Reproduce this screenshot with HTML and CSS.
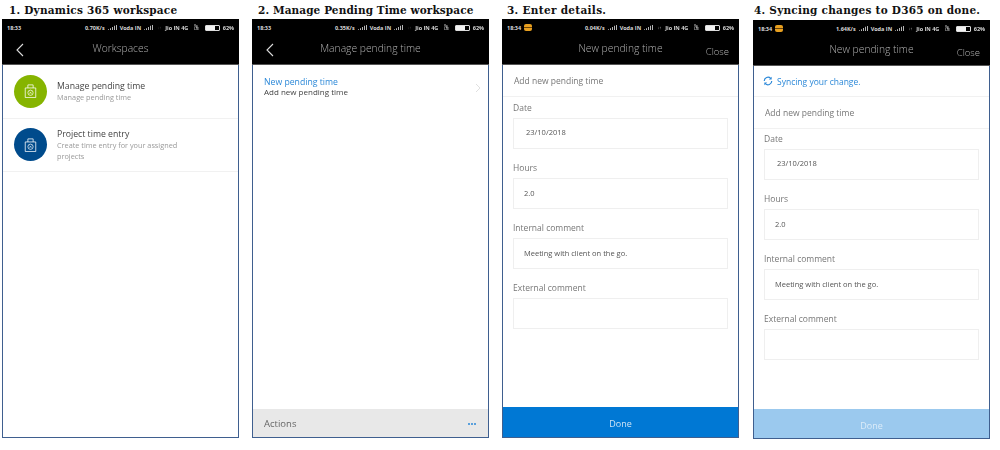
FILE: index.html
```html
<!DOCTYPE html>
<html lang="en">
<head>
  <meta charset="UTF-8">
  <title>Pending time walkthrough</title>
  <link rel="stylesheet" href="styles.css">
</head>
<body>

  <svg class="defs" width="0" height="0">
    <symbol id="bars" viewBox="0 0 11 6">
      <path d="M0 5h1v1H0zM2.500 4h1v2h-1zM5 2.500h1V6H5zM7.500 1h1v5h-1zM10 0h1v6h-1z" fill="#ddd"/>
    </symbol>
    <symbol id="clip" viewBox="0 0 14 16">
      <path d="M1 4.500h12v11H1zM4 4.500V1h6v3.500" fill="none" stroke="#fff" stroke-opacity=".8" stroke-width="1.100"/>
      <circle cx="7" cy="10" r="3" fill="none" stroke="#fff" stroke-opacity=".8" stroke-width="1"/>
      <path d="M5.800 8.800l2.400 2.400M8.200 8.800l-2.400 2.400" stroke="#fff" stroke-opacity=".8" stroke-width=".8"/>
    </symbol>
    <symbol id="back" viewBox="0 0 8 14">
      <path d="M7 1L1 7l6 6" fill="none" stroke="#ddd" stroke-width="1.100"/>
    </symbol>
  </svg>

  <div class="page">

    <div class="step first">
      <h2>1. Dynamics 365 workspace</h2>
      <div class="phone">
        <div class="topbar">
          <div class="status">
            <span class="time">18:33</span>
            <span class="spacer"></span>
            <span>0.70K/s</span><svg class="sig"><use href="#bars"/></svg>
            <span>Voda IN</span><svg class="sig"><use href="#bars"/></svg>
            <span class="arrows dim">↓↑</span>
            <span>Jio IN 4G</span><span class="lte">Vo<br>LTE</span>
            <span class="batt"><i></i></span><span>62%</span>
          </div>
          <div class="title">
            <svg class="back"><use href="#back"/></svg>
            <span class="title-text">Workspaces</span>
          </div>
        </div>
        <div class="ws-row">
          <span class="circle green"><svg class="clip"><use href="#clip"/></svg></span>
          <div class="ws-text">
            <div class="ws-name">Manage pending time</div>
            <div class="ws-desc">Manage pending time</div>
          </div>
        </div>
        <div class="ws-row">
          <span class="circle blue"><svg class="clip"><use href="#clip"/></svg></span>
          <div class="ws-text">
            <div class="ws-name">Project time entry</div>
            <div class="ws-desc">Create time entry for your assigned<br>projects</div>
          </div>
        </div>
      </div>
    </div>

    <div class="step second">
      <h2>2. Manage Pending Time workspace</h2>
      <div class="phone">
        <div class="topbar">
          <div class="status">
            <span class="time">18:33</span>
            <span class="spacer"></span>
            <span>0.35K/s</span><svg class="sig"><use href="#bars"/></svg>
            <span>Voda IN</span><svg class="sig"><use href="#bars"/></svg>
            <span class="arrows dim">↓↑</span>
            <span>Jio IN 4G</span><span class="lte">Vo<br>LTE</span>
            <span class="batt"><i></i></span><span>62%</span>
          </div>
          <div class="title">
            <svg class="back"><use href="#back"/></svg>
            <span class="title-text">Manage pending time</span>
          </div>
        </div>
        <div class="link-row">
          <div>
            <div class="link-name">New pending time</div>
            <div class="link-desc">Add new pending time</div>
          </div>
          <svg class="chevron" viewBox="0 0 6 10"><path d="M1 1l4 4-4 4" fill="none" stroke="#ddd" stroke-width=".9"/></svg>
        </div>
        <div class="grow"></div>
        <div class="actions">
          <span>Actions</span>
          <span class="dots"><i></i><i></i><i></i></span>
        </div>
      </div>
    </div>

    <div class="step third">
      <h2>3. Enter details.</h2>
      <div class="phone">
        <div class="topbar">
          <div class="status">
            <span class="time">18:34</span><span class="app-badge"></span>
            <span class="spacer"></span>
            <span>0.04K/s</span><svg class="sig"><use href="#bars"/></svg>
            <span>Voda IN</span><svg class="sig"><use href="#bars"/></svg>
            <span class="arrows">↓↑</span>
            <span>Jio IN 4G</span><span class="lte">Vo<br>LTE</span>
            <span class="batt"><i></i></span><span>62%</span>
          </div>
          <div class="title">
            <span class="title-text">New pending time</span>
            <span class="close">Close</span>
          </div>
        </div>
        <div class="form-head">Add new pending time</div>
        <div class="form">
          <label>Date</label>
          <div class="field date">23/10/2018</div>
          <label>Hours</label>
          <div class="field">2.0</div>
          <label>Internal comment</label>
          <div class="field">Meeting with client on the go.</div>
          <label>External comment</label>
          <div class="field"></div>
        </div>
        <div class="grow"></div>
        <div class="done">Done</div>
      </div>
    </div>

    <div class="step last">
      <h2>4. Syncing changes to D365 on done.</h2>
      <div class="phone">
        <div class="topbar">
          <div class="status">
            <span class="time">18:34</span><span class="app-badge"></span>
            <span class="spacer"></span>
            <span>1.64K/s</span><svg class="sig"><use href="#bars"/></svg>
            <span>Voda IN</span><svg class="sig"><use href="#bars"/></svg>
            <span class="arrows">↓↑</span>
            <span>Jio IN 4G</span><span class="lte">Vo<br>LTE</span>
            <span class="batt"><i></i></span><span>62%</span>
          </div>
          <div class="title">
            <span class="title-text">New pending time</span>
            <span class="close">Close</span>
          </div>
        </div>
        <div class="sync">
          <svg class="sync-icon" viewBox="0 0 12 12">
            <path d="M1.500 6a4.500 4.500 0 0 1 7.700-3.200M10.500 6a4.500 4.500 0 0 1-7.700 3.200" fill="none" stroke="#2b88d8" stroke-width="1.400"/>
            <path d="M10.400 .8v3.400H7zM1.600 11.200V7.800H5z" fill="#2b88d8"/>
          </svg>
          <span>Syncing your change.</span>
        </div>
        <div class="form-head">Add new pending time</div>
        <div class="form">
          <label>Date</label>
          <div class="field date">23/10/2018</div>
          <label>Hours</label>
          <div class="field">2.0</div>
          <label>Internal comment</label>
          <div class="field">Meeting with client on the go.</div>
          <label>External comment</label>
          <div class="field"></div>
        </div>
        <div class="grow"></div>
        <div class="done syncing">Done</div>
      </div>
    </div>

  </div>

</body>
</html>
```

FILE: styles.css
```css
body {
  font-family: "Open Sans", Arial, sans-serif;
  background: #fff;
  color: #333;
  margin: 0;
  padding: 0;
}

.defs {
  display: block;
}

.page {
  display: flex;
  gap: 13px;
  padding: 3px 0 0 2px;
}

.step {
  width: 237px;
}

.step.first h2 {
  letter-spacing: .22px;
}

.step.second h2 {
  padding-left: 6px;
}

.step.third h2 {
  padding-left: 5px;
  letter-spacing: .3px;
}

.step.last {
  margin-left: 1px;
}

.step.last h2 {
  margin-bottom: 3px;
  padding-left: 1px;
  letter-spacing: .24px;
}

h2 {
  font-family: "DejaVu Serif", "Liberation Serif", serif;
  font-size: 10.500px;
  font-weight: bold;
  line-height: 14px;
  height: 14px;
  margin: 0 0 2px;
  padding-left: 7px;
  color: #111;
  white-space: nowrap;
  letter-spacing: .1px;
}

.phone {
  height: 419px;
  box-sizing: border-box;
  border: 1px solid #3f5f8f;
  border-top: 0;
  display: flex;
  flex-direction: column;
  filter: blur(.3px);
}

.topbar {
  background: #000;
  color: #ddd;
  height: 46px;
  margin: 0 -1px;
  padding: 0 5px;
  border-bottom: 1px solid #555;
  box-sizing: border-box;
}

.status {
  display: flex;
  align-items: center;
  gap: 3px;
  height: 17px;
  font-size: 5.500px;
  font-weight: bold;
  color: #d8d8d8;
  white-space: nowrap;
}

.spacer {
  flex: 1;
}

.app-badge {
  width: 8px;
  height: 7px;
  border-radius: 2px;
  background: linear-gradient(#e8a020 40%, #6a4208 40%, #6a4208 60%, #e8a020 60%);
}

.sig {
  width: 9px;
  height: 5px;
}

.arrows {
  font-size: 4px;
  font-weight: normal;
  margin: 0 1px;
}

.arrows.dim {
  color: #555;
}

.lte {
  font-size: 2.600px;
  line-height: 3px;
  margin: 0 3px;
}

.batt {
  width: 15px;
  height: 6px;
  border: 1px solid #ddd;
  border-radius: 1px;
  box-sizing: border-box;
  display: block;
}

.batt i {
  display: block;
  width: 9px;
  height: 4px;
  background: #f2f2f2;
}

.title {
  position: relative;
  padding-top: 2px;
  text-align: center;
  font-size: 10.300px;
  line-height: 20px;
  color: #b0b0b0;
  font-weight: 300;
}

.title-text {
  display: block;
}

.back {
  position: absolute;
  left: 9px;
  top: 7px;
  width: 8px;
  height: 14px;
}

.close {
  position: absolute;
  right: 5px;
  top: 6px;
  font-size: 9.500px;
}

.ws-row {
  display: flex;
  align-items: center;
  gap: 10px;
  height: 53.500px;
  padding-left: 11px;
  border-bottom: 1px solid #f1f1f1;
  box-sizing: border-box;
}

.circle {
  width: 33px;
  height: 33px;
  border-radius: 50%;
  display: flex;
  align-items: center;
  justify-content: center;
  flex: none;
}

.circle.green {
  background: #86b400;
}

.circle.blue {
  background: #004b8c;
}

.clip {
  width: 13px;
  height: 14px;
}

.ws-name {
  font-size: 8.700px;
  line-height: 12px;
  color: #444;
}

.ws-desc {
  font-size: 7.300px;
  line-height: 11px;
  color: #9a9a9a;
}

.link-row {
  display: flex;
  align-items: center;
  justify-content: space-between;
  padding: 13px 7px 0 11px;
}

.link-name {
  font-size: 8.700px;
  line-height: 9px;
  color: #2b88d8;
}

.link-desc {
  font-size: 8px;
  line-height: 10px;
  color: #444;
}

.chevron {
  width: 6px;
  height: 10px;
}

.grow {
  flex: 1;
}

.actions {
  height: 28px;
  padding: 1px 12px 0 11px;
  box-sizing: border-box;
  background: #e8e8e8;
  display: flex;
  align-items: center;
  justify-content: space-between;
  font-size: 9.500px;
  color: #666;
}

.dots {
  display: flex;
  gap: 1px;
}

.dots i {
  width: 2px;
  height: 2px;
  border-radius: 50%;
  background: #2b88d8;
}

.sync {
  display: flex;
  align-items: center;
  gap: 4px;
  height: 31px;
  padding-left: 9px;
  font-size: 8.500px;
  color: #2b88d8;
  border-bottom: 1px solid #f1f1f1;
  box-sizing: border-box;
}

.sync-icon {
  width: 10px;
  height: 10px;
}

.form-head {
  height: 32px;
  line-height: 32px;
  padding-left: 11px;
  font-size: 8.500px;
  color: #777;
  border-bottom: 1px solid #f1f1f1;
  box-sizing: border-box;
}

.form {
  padding: 0 10px;
}

.form label {
  display: block;
  height: 21px;
  line-height: 22px;
  font-size: 8.500px;
  color: #777;
}

.step.last .form label:first-child {
  height: 20px;
  line-height: 20px;
}

.field {
  height: 31px;
  line-height: 28px;
  margin-bottom: 8px;
  padding-left: 10px;
  font-size: 7.500px;
  color: #555;
  border: 1px solid #efefef;
  box-sizing: border-box;
}

.field.date {
  line-height: 26px;
  padding-left: 12px;
}

.done {
  height: 30px;
  line-height: 33px;
  background: #0078d4;
  color: #cfe4f5;
  text-align: center;
  font-size: 9px;
}

.done.syncing {
  height: 29px;
  background: #9bc9ee;
  color: #dcecf9;
}
```
